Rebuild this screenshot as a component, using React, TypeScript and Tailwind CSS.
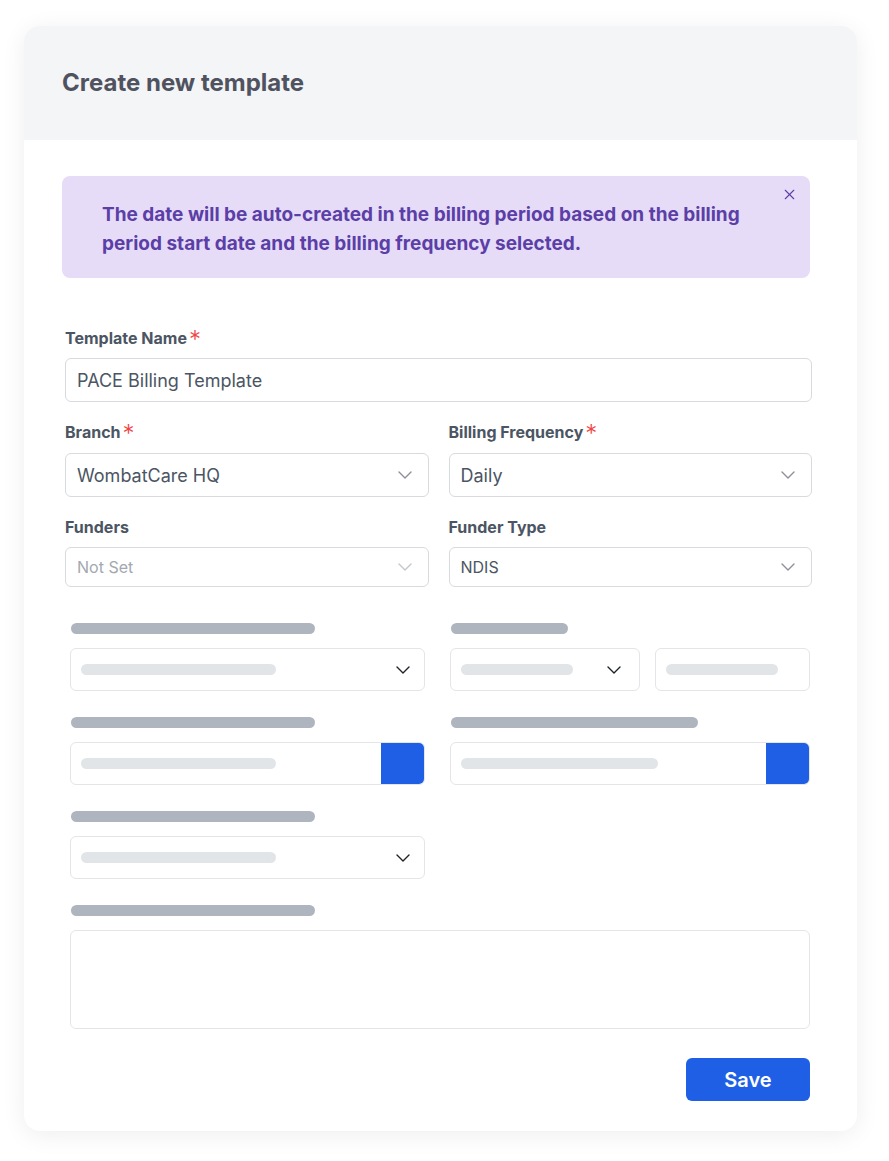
import { X } from "lucide-react";

function Chevron({ className = "" }: { className?: string }) {
  return (
    <svg width="14" height="8" viewBox="0 0 14 8" fill="none" className={className}>
      <path d="M1 1l6 6 6-6" stroke="currentColor" strokeWidth="1.4" strokeLinecap="round" strokeLinejoin="round" />
    </svg>
  );
}

function Label({ text, required }: { text: string; required?: boolean }) {
  return (
    <div className="flex h-5 items-center text-[16px] font-bold text-[#4b5563]">
      {text}
      {required && <span className="ml-[2px] mt-[4px] text-[24px] font-light leading-none text-[#ef4444]">*</span>}
    </div>
  );
}

function Select({ value, disabled, tall }: { value: string; disabled?: boolean; tall?: boolean }) {
  return (
    <div
      className={`flex items-center justify-between rounded-md border border-[#d7dade] bg-white pl-[11px] pr-[16px] ${
        tall ? "h-[44px] text-[18px]" : "h-[40px] text-[16px]"
      } ${disabled ? "text-[#a3a8b0]" : "text-[#4b5563]"}`}
    >
      <span>{value}</span>
      <Chevron className={disabled ? "text-[#c3c7cc]" : "text-[#8b9099]"} />
    </div>
  );
}

function Bar({ w }: { w: string }) {
  return <div className={`h-[11px] rounded-full bg-[#aeb5bf] ${w}`} />;
}

function Ghost({ w }: { w: string }) {
  return <div className={`h-[11px] rounded-full bg-[#e2e5e8] ${w}`} />;
}

function SkelSelect({ barW }: { barW: string }) {
  return (
    <div className="flex h-[43px] items-center justify-between rounded-md border border-[#e3e5e8] bg-white pl-[10px] pr-[14px]">
      <Ghost w={barW} />
      <Chevron className="text-[#1f2328]" />
    </div>
  );
}

function SkelButtonInput({ barW }: { barW: string }) {
  return (
    <div className="flex h-[43px] overflow-hidden rounded-md border border-[#e3e5e8] bg-white">
      <div className="flex flex-1 items-center pl-[10px]">
        <Ghost w={barW} />
      </div>
      <div className="w-[43px] bg-[#1f5fe6]" />
    </div>
  );
}

export default function App() {
  return (
    <div className="min-h-screen bg-white pt-[26px] font-['Inter',sans-serif]">
      <div className="ml-[24px] w-[833px] overflow-hidden rounded-2xl bg-white shadow-[0_4px_24px_rgba(0,0,0,0.07)]">
        <div className="flex h-[114px] items-center bg-[#f3f5f7] px-[38px]">
          <h1 className="text-[24px] font-bold text-[#50535f]">Create new template</h1>
        </div>

        <div className="pb-[30px] pl-[38px] pr-[45px] pt-[36px]">
          <div className="relative mr-[2px] h-[102px] rounded-lg bg-[#e6dcf8] pl-[40px] pr-[64px] pt-[24px]">
            <p className="text-[19px] font-bold leading-[29px] text-[#5b3ea6]">
              The date will be auto-created in the billing period based on the billing period start date and the billing frequency selected.
            </p>
            <X className="absolute right-[12px] top-[10px] h-[17px] w-[17px] text-[#5b3ea6]" strokeWidth={1.5} />
          </div>

          <div className="mt-[50px] pl-[3px]">
            <Label text="Template Name" required />
            <div className="mt-[10px] flex h-[44px] items-center rounded-md border border-[#d7dade] pl-[11px] text-[18px] text-[#4b5563]">
              PACE Billing Template
            </div>

            <div className="mt-[20px] grid grid-cols-2 gap-x-[20px]">
              <div>
                <Label text="Branch" required />
                <div className="mt-[11px]">
                  <Select value="WombatCare HQ" tall />
                </div>
              </div>
              <div>
                <Label text="Billing Frequency" required />
                <div className="mt-[11px]">
                  <Select value="Daily" tall />
                </div>
              </div>
              <div className="mt-[20px]">
                <Label text="Funders" />
                <div className="mt-[10px]">
                  <Select value="Not Set" disabled />
                </div>
              </div>
              <div className="mt-[20px]">
                <Label text="Funder Type" />
                <div className="mt-[10px]">
                  <Select value="NDIS" />
                </div>
              </div>
            </div>
          </div>

          <div className="mt-[36px] pl-[8px] pr-[2px]">
            <div className="grid grid-cols-[355px_1fr] gap-x-[25px]">
              <div>
                <div className="pl-[1px]">
                  <Bar w="w-[244px]" />
                </div>
                <div className="mt-[14px]">
                  <SkelSelect barW="w-[195px]" />
                </div>
              </div>
              <div>
                <div className="pl-[1px]">
                  <Bar w="w-[117px]" />
                </div>
                <div className="mt-[14px] flex gap-[15px]">
                  <div className="flex h-[43px] w-[190px] items-center justify-between rounded-md border border-[#e3e5e8] pl-[10px] pr-[18px]">
                    <Ghost w="w-[112px]" />
                    <Chevron className="text-[#1f2328]" />
                  </div>
                  <div className="flex h-[43px] flex-1 items-center rounded-md border border-[#e3e5e8] pl-[10px]">
                    <Ghost w="w-[112px]" />
                  </div>
                </div>
              </div>

              <div className="mt-[26px]">
                <div className="pl-[1px]">
                  <Bar w="w-[244px]" />
                </div>
                <div className="mt-[14px]">
                  <SkelButtonInput barW="w-[195px]" />
                </div>
              </div>
              <div className="mt-[26px]">
                <div className="pl-[1px]">
                  <Bar w="w-[247px]" />
                </div>
                <div className="mt-[14px]">
                  <SkelButtonInput barW="w-[197px]" />
                </div>
              </div>

              <div className="mt-[26px]">
                <div className="pl-[1px]">
                  <Bar w="w-[244px]" />
                </div>
                <div className="mt-[14px]">
                  <SkelSelect barW="w-[195px]" />
                </div>
              </div>
              <div />
            </div>

            <div className="mt-[26px] pl-[1px]">
              <Bar w="w-[244px]" />
            </div>
            <div className="mt-[14px] h-[99px] rounded-md border border-[#e3e5e8]" />
          </div>

          <div className="mr-[2px] mt-[29px] flex justify-end">
            <button className="h-[43px] w-[124px] rounded-md bg-[#1f5fe6] text-[20px] font-semibold text-white">Save</button>
          </div>
        </div>
      </div>
    </div>
  );
}
